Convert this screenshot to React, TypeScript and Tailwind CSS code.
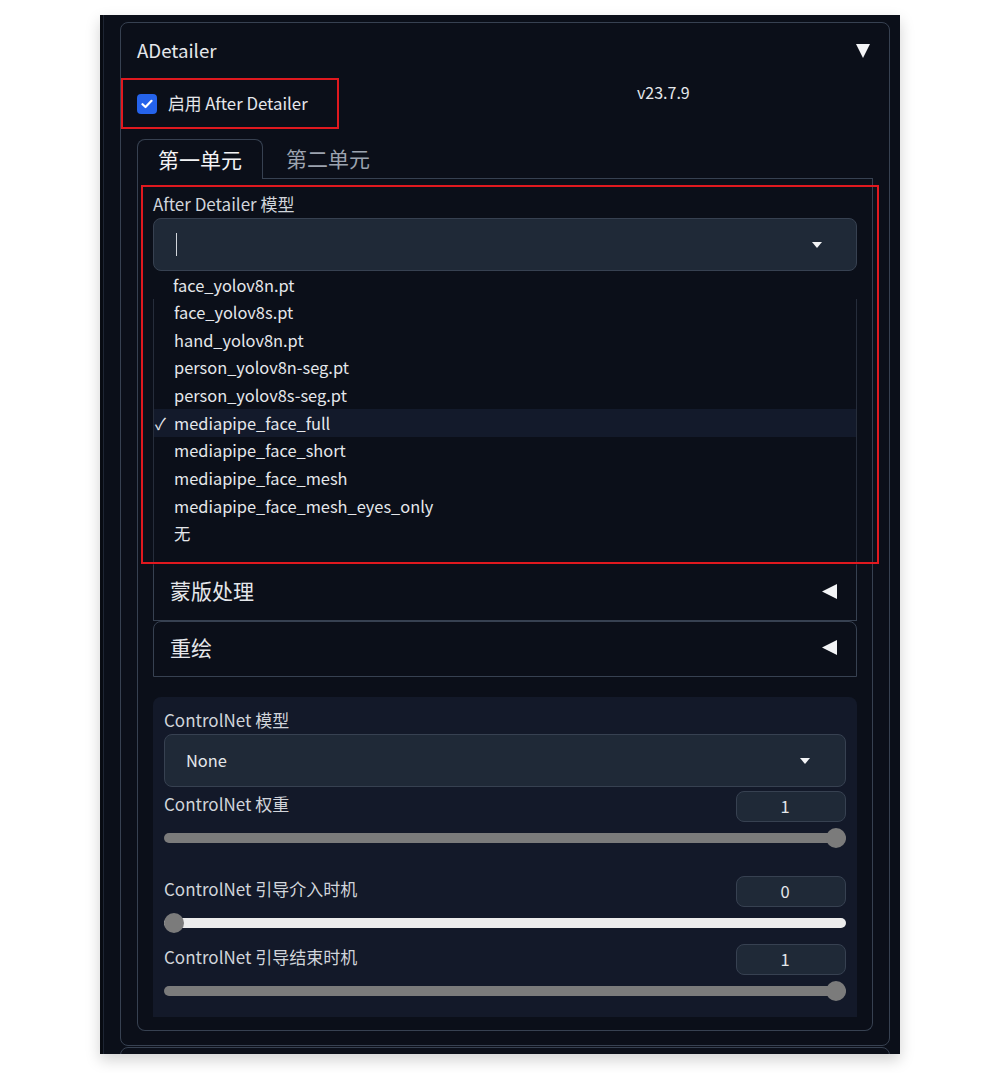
import React from "react"

const options = [
  "face_yolov8n.pt",
  "face_yolov8s.pt",
  "hand_yolov8n.pt",
  "person_yolov8n-seg.pt",
  "person_yolov8s-seg.pt",
  "mediapipe_face_full",
  "mediapipe_face_short",
  "mediapipe_face_mesh",
  "mediapipe_face_mesh_eyes_only",
  "无",
]
const selected = "mediapipe_face_full"

function CaretDown({ className = "" }: { className?: string }) {
  return (
    <svg width="10" height="6" viewBox="0 0 10 6" className={className}>
      <polygon points="0,0 10,0 5,6" fill="#f3f4f6" />
    </svg>
  )
}

function TriangleLeft() {
  return (
    <svg width="15" height="15" viewBox="0 0 15 15">
      <polygon points="15,0 15,15 0,7.5" fill="#f3f4f6" />
    </svg>
  )
}

function Option({ label }: { label: string }) {
  const active = label === selected
  return (
    <div className={`flex h-[27.67px] items-center text-[16.4px] text-[#e5e7eb] ${active ? "bg-[#131a2b]" : ""}`}>
      <span className="w-[20px] pl-[1px] text-[16px]">{active ? "✓" : ""}</span>
      <span>{label}</span>
    </div>
  )
}

function SubAccordion({ title, first }: { title: string; first?: boolean }) {
  return (
    <div
      className={`flex h-[56px] items-center justify-between pb-[3px] pl-[16px] pr-[19px] border-[#374151] ${
        first ? "border-x border-b" : "border rounded-t-[8px]"
      }`}
    >
      <span className="text-[21px] text-[#e5e7eb]">{title}</span>
      <TriangleLeft />
    </div>
  )
}

function NumberRow({ label, value }: { label: string; value: string }) {
  return (
    <div className="flex items-start justify-between">
      <span className="pt-[3px] text-[17px] leading-[20px] text-[#d1d5db]">{label}</span>
      <div className="flex h-[31px] w-[110px] items-center justify-center rounded-[8px] border border-[#374151] bg-[#1f2937] pr-[12px] text-[16.5px] text-[#e5e7eb]">
        {value}
      </div>
    </div>
  )
}

function Slider({ full }: { full: boolean }) {
  return (
    <div className="relative mt-[6px] flex h-[20px] items-center">
      <div className={`h-[10px] w-full rounded-full ${full ? "bg-[#7b7b7b]" : "bg-[#ececec]"}`} />
      <div
        className={`absolute top-0 h-[20px] w-[20px] rounded-full bg-[#7b7b7b] ${full ? "right-0" : "left-0"}`}
      />
    </div>
  )
}

export default function App() {
  return (
    <div className="min-h-[1073px] bg-white pt-[15px] font-['Noto_Sans_CJK_SC',sans-serif]">
      <div className="ml-[100px] h-[1039px] w-[800px] overflow-hidden bg-[#080b12] pl-[3px] shadow-[0_6px_14px_rgba(0,0,0,0.18)]">
        <div className="h-full border-l border-[#1e2533] bg-[#0b0f19] pt-[7px]">
          {/* ADetailer 折叠面板 */}
          <div className="ml-[16px] w-[770px] rounded-[8px] border border-[#374151] px-[16px] pb-[14px]">
            <div className="flex h-[55px] items-center justify-between pr-[3px]">
              <span className="text-[18.7px] text-[#e5e7eb]">ADetailer</span>
              <svg width="14" height="14" viewBox="0 0 14 14">
                <polygon points="0,0 14,0 7,14" fill="#f3f4f6" />
              </svg>
            </div>

            <div className="flex">
              <div className="ml-[-16px] flex h-[51px] w-[218px] items-center border-2 border-[#e0191f] pl-[14px]">
                <div className="flex h-[20px] w-[20px] items-center justify-center rounded-[4px] bg-[#2563eb]">
                  <svg width="12" height="10" viewBox="0 0 12 10">
                    <path d="M1.5 5.2 L4.5 8 L10.5 1.8" stroke="white" strokeWidth="2.2" fill="none" strokeLinecap="round" strokeLinejoin="round" />
                  </svg>
                </div>
                <span className="ml-[11px] text-[16.8px] text-[#e5e7eb]">启用 After Detailer</span>
              </div>
              <span className="ml-[298px] mt-[3px] text-[16px] leading-[22px] text-[#e5e7eb]">v23.7.9</span>
            </div>

            {/* 标签页 */}
            <div className="mt-[10px] flex h-[40px]">
              <div className="flex items-center rounded-t-[8px] border border-b-0 border-[#374151] px-[20px] text-[21px] text-[#f3f4f6]">
                第一单元
              </div>
              <div className="flex items-center border-b border-[#374151] pl-[23px] pr-[20px] text-[21px] text-[#9ca3af]">
                第二单元
              </div>
              <div className="flex-1 border-b border-[#374151]" />
            </div>

            <div className="relative rounded-b-[8px] border-x border-b border-[#374151] px-[15px] pt-[15px] pb-[13px]">
              <div className="text-[17px] leading-[20px] text-[#d1d5db]">After Detailer 模型</div>
              <div className="mt-[4px] flex h-[53px] items-center justify-between rounded-[8px] border border-[#374151] bg-[#1f2937] pl-[22px] pr-[34px]">
                <div className="h-[23px] w-px bg-[#d1d5db]" />
                <CaretDown />
              </div>

              {/* 下拉列表 */}
              <div className="h-[294px]">
                <Option label={options[0]} />
                <div className="h-[266.33px] border-x border-[#262d3b]">
                  {options.slice(1).map((o) => (
                    <Option key={o} label={o} />
                  ))}
                </div>
              </div>

              <SubAccordion title="蒙版处理" first />
              <SubAccordion title="重绘" />

              {/* ControlNet */}
              <div className="mt-[20px] rounded-t-[8px] bg-[#131929] px-[11px] pt-[13px] pb-[16px]">
                <div className="text-[17px] leading-[20px] text-[#d1d5db]">ControlNet 模型</div>
                <div className="mt-[4px] flex h-[53px] items-center justify-between rounded-[8px] border border-[#374151] bg-[#1f2937] pl-[21px] pr-[35px]">
                  <span className="text-[16.4px] text-[#e5e7eb]">None</span>
                  <CaretDown />
                </div>
                <div className="mt-[4px]">
                  <NumberRow label="ControlNet 权重" value="1" />
                </div>
                <Slider full />
                <div className="mt-[28px]">
                  <NumberRow label="ControlNet 引导介入时机" value="0" />
                </div>
                <Slider full={false} />
                <div className="mt-[11px]">
                  <NumberRow label="ControlNet 引导结束时机" value="1" />
                </div>
                <Slider full />
              </div>

              <div className="absolute left-[3px] top-[6px] h-[379px] w-[738px] border-2 border-[#e0191f]" />
            </div>
          </div>

          <div className="ml-[16px] mt-[1px] h-[40px] w-[770px] rounded-t-[8px] border border-[#374151]" />
        </div>
      </div>
    </div>
  )
}
